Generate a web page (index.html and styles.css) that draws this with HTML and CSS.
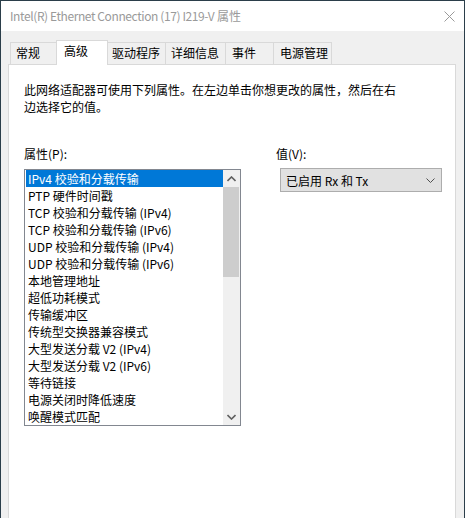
FILE: index.html
```html
<!DOCTYPE html>
<html lang="zh-CN">
<head>
<meta charset="utf-8">
<title>Intel(R) Ethernet Connection (17) I219-V 属性</title>
<link rel="stylesheet" href="styles.css">
</head>
<body>
<div class="window">
  <div class="titlebar">
    <span class="title"><span class="title-latin">Intel(R) Ethernet Connection (17) I219-V</span> 属性</span>
    <svg class="close" width="11" height="11" viewBox="0 0 11 11"><path d="M0.5 0.5 L10.5 10.5 M10.5 0.5 L0.5 10.5" stroke="#9a9a9a" stroke-width="1" fill="none"/></svg>
  </div>
  <div class="body">
    <div class="tabs">
      <div class="tab t-general">常规</div>
      <div class="tab selected">高级</div>
      <div class="tab t-driver">驱动程序</div>
      <div class="tab t-details">详细信息</div>
      <div class="tab t-events">事件</div>
      <div class="tab t-power">电源管理</div>
    </div>
    <div class="panel">
      <p class="desc">此网络适配器可使用下列属性。在左边单击你想更改的属性，然后在右边选择它的值。</p>
      <div class="fields">
        <div class="col-left">
          <div class="label">属性(P):</div>
          <div class="listbox">
            <ul class="items">
              <li class="item active">IPv4 校验和分载传输</li>
              <li class="item">PTP 硬件时间戳</li>
              <li class="item">TCP 校验和分载传输 (IPv4)</li>
              <li class="item">TCP 校验和分载传输 (IPv6)</li>
              <li class="item">UDP 校验和分载传输 (IPv4)</li>
              <li class="item">UDP 校验和分载传输 (IPv6)</li>
              <li class="item">本地管理地址</li>
              <li class="item">超低功耗模式</li>
              <li class="item">传输缓冲区</li>
              <li class="item">传统型交换器兼容模式</li>
              <li class="item">大型发送分载 V2 (IPv4)</li>
              <li class="item">大型发送分载 V2 (IPv6)</li>
              <li class="item">等待链接</li>
              <li class="item">电源关闭时降低速度</li>
              <li class="item">唤醒模式匹配</li>
            </ul>
            <div class="scrollbar">
              <div class="sb-btn">
                <svg width="9" height="6" viewBox="0 0 9 6"><path d="M0.5 5 L4.5 1 L8.5 5" stroke="#606060" stroke-width="1.6" fill="none"/></svg>
              </div>
              <div class="sb-track"><div class="sb-thumb"></div></div>
              <div class="sb-btn">
                <svg width="9" height="6" viewBox="0 0 9 6"><path d="M0.5 1 L4.5 5 L8.5 1" stroke="#606060" stroke-width="1.6" fill="none"/></svg>
              </div>
            </div>
          </div>
        </div>
        <div class="col-right">
          <div class="label">值(V):</div>
          <div class="select">
            <span class="select-text">已启用 Rx 和 Tx</span>
            <svg class="chev" width="9" height="5" viewBox="0 0 9 5"><path d="M0.5 0.5 L4.5 4.5 L8.5 0.5" stroke="#505050" stroke-width="1" fill="none"/></svg>
          </div>
        </div>
      </div>
    </div>
  </div>
</div>
</body>
</html>
```

FILE: styles.css
```css
* { box-sizing: border-box; }
html, body { margin: 0; padding: 0; background: #2b3e4a; }
body {
  font-family: "Noto Sans CJK SC", "Noto Sans", sans-serif;
  font-size: 12px;
  color: #000;
}
.window {
  width: 465px;
  height: 518px;
  overflow: hidden;
  border-top: 1px solid #2b3e4a;
  border-left: 1px solid #2b3e4a;
  border-right: 1px solid #2b3e4a;
  background: #f0f0f0;
  display: flex;
  flex-direction: column;
}
.titlebar {
  height: 30px;
  background: #fff;
  display: flex;
  align-items: center;
  justify-content: space-between;
  padding: 0 9px 0 9px;
  flex: none;
}
.title {
  color: #9a9a9a;
  font-size: 12px;
  line-height: 16px;
  font-family: "Noto Sans CJK SC", sans-serif;
}
.title-latin { letter-spacing: -0.4px; }
.close { display: block; margin-right: 0; }
.body {
  flex: 1;
  padding: 9px 8px 0 7px;
  display: flex;
  flex-direction: column;
}
.tabs {
  display: flex;
  align-items: flex-end;
  padding-left: 2px;
  height: 24px;
  flex: none;
}
.tab {
  height: 22px;
  line-height: 20px;
  background: #f0f0f0;
  border-top: 1px solid #d9d9d9;
  border-left: 1px solid #d9d9d9;
  padding-left: 5px;
  white-space: nowrap;
}
.t-general { width: 46px; }
.selected {
  width: 52px;
  height: 25px;
  margin-bottom: -1px;
  background: #fff;
  border-right: 1px solid #d9d9d9;
  position: relative;
  z-index: 1;
  padding-left: 7px;
  line-height: 19px;
}
.t-driver { width: 57px; border-left: none; padding-left: 4px; }
.t-details { width: 60px; }
.t-events { width: 48px; padding-left: 6px; }
.t-power { width: 59px; border-right: 1px solid #d9d9d9; padding-left: 6px; }
.panel {
  flex: 1;
  background: #fff;
  border: 1px solid #d9d9d9;
  padding: 16px 15px 0 15px;
  min-height: 470px;
}
.desc {
  margin: 0;
  width: 380px;
  line-height: 17px;
}
.fields {
  display: flex;
  margin-top: 30px;
}
.label {
  line-height: 17px;
  height: 17px;
}
.col-left { width: 217px; }
.col-right { margin-left: 35px; }
.listbox {
  margin-top: 7px;
  width: 217px;
  height: 257px;
  border: 1px solid #828790;
  display: flex;
  background: #fff;
}
.items {
  list-style: none;
  margin: 0;
  padding: 0 0 0 1px;
  flex: 1;
}
.item {
  height: 17px;
  line-height: 17px;
  padding-left: 2px;
  white-space: nowrap;
}
.item.active { background: #0078d7; color: #fff; }
.scrollbar {
  width: 17px;
  display: flex;
  flex-direction: column;
  background: #f0f0f0;
}
.sb-btn {
  height: 17px;
  display: flex;
  align-items: center;
  justify-content: center;
  flex: none;
}
.sb-track { flex: 1; }
.sb-thumb {
  height: 90px;
  width: 16px;
  background: #cdcdcd;
}
.select {
  margin-top: 6px;
  margin-left: 4px;
  width: 162px;
  height: 24px;
  background: #e1e1e1;
  border: 1px solid #adadad;
  display: flex;
  align-items: center;
  justify-content: space-between;
  padding: 0 6px 0 5px;
}
.select-text { line-height: 17px; }
.chev { display: block; }
```
